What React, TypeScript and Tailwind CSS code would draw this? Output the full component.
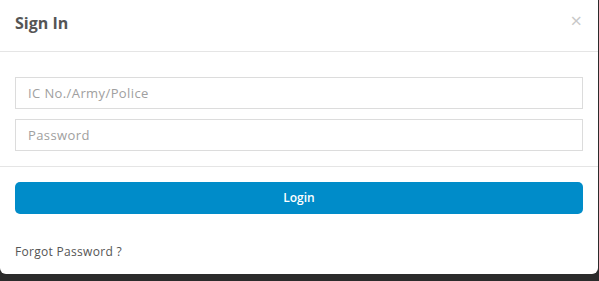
import React from "react";

export default function App() {
  return (
    <div className="w-[599px] h-[281px] bg-[#2b2b2b] overflow-hidden" style={{ fontFamily: "'Open Sans', 'Liberation Sans', sans-serif" }}>
      <div className="w-[598px] h-[274px] bg-white rounded-b-[6px] flex flex-col">
        <div className="h-[52px] border-b border-[#e5e5e5] flex items-start justify-between pl-[15px] pr-[16px] pt-[12px]">
          <h4 className="text-[16px] leading-[22px] font-bold text-[#555]">Sign In</h4>
          <span className="text-[#c8c8c8] text-[20px] leading-none -mt-[1px]">×</span>
        </div>
        <div className="px-[15px] pt-[25px] pb-[15px] flex flex-col gap-[10px] border-b border-[#e5e5e5]">
          <input
            className="h-[32px] w-full border border-[#dcdcdc] px-[12px] text-[13px] tracking-[0.4px] text-[#555] placeholder:text-[#a0a0a0] outline-none"
            placeholder="IC No./Army/Police"
          />
          <input
            type="password"
            className="h-[32px] w-full border border-[#dcdcdc] px-[12px] text-[13px] tracking-[0.4px] text-[#555] placeholder:text-[#a0a0a0] outline-none"
            placeholder="Password"
          />
        </div>
        <div className="px-[15px] pt-[15px]">
          <button className="w-full h-[32px] bg-[#008cc9] rounded-[5px] text-white text-[12px] font-semibold">Login</button>
          <div className="mt-[29px] text-[12px] tracking-[0.3px] text-[#555]">Forgot Password ?</div>
        </div>
      </div>
    </div>
  );
}
